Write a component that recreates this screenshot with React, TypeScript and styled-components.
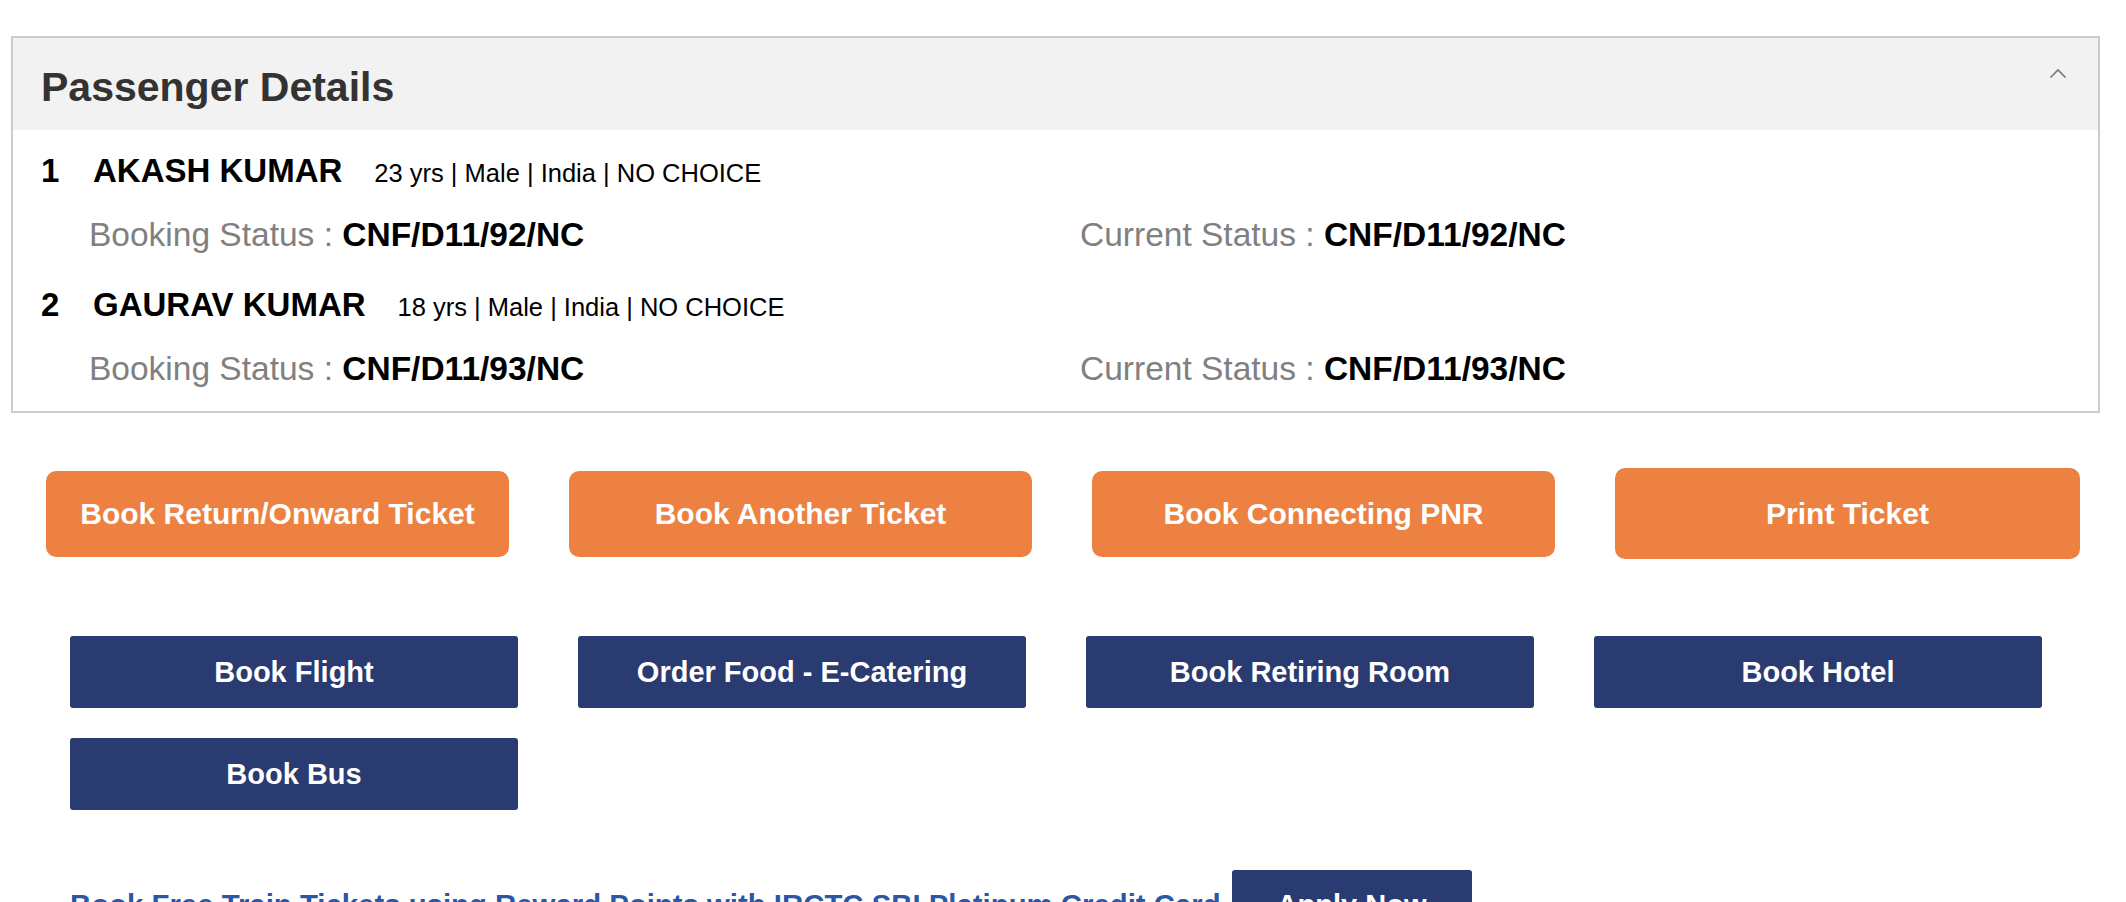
import React from "react";
import styled, { createGlobalStyle } from "styled-components";

const GlobalStyle = createGlobalStyle`
  html, body {
    margin: 0;
    padding: 0;
    overflow: hidden;
    background: #ffffff;
  }
  body {
    font-family: "Liberation Sans", Arial, Helvetica, sans-serif;
    color: #000;
  }
  * { box-sizing: border-box; }
`;

const Page = styled.div`
  padding: 36px 0 0 11px;
  width: 2126px;
`;

const Panel = styled.section`
  width: 2089px;
  border: 2px solid #cccccc;
  background: #ffffff;
`;

const PanelHeader = styled.header`
  display: flex;
  justify-content: space-between;
  align-items: flex-start;
  height: 92px;
  padding: 25px 31px 0 28px;
  background: #f2f2f2;
`;

const Title = styled.h2`
  margin: 0;
  font-size: 41px;
  line-height: 48px;
  font-weight: 700;
  color: #333333;
`;

const Toggle = styled.span`
  display: flex;
  margin-top: 5px;
`;

const PanelBody = styled.div`
  padding: 21px 0 22px 28px;
`;

const Passenger = styled.div`
  & + & {
    margin-top: 30px;
  }
`;

const NameRow = styled.div`
  display: flex;
  align-items: baseline;
  line-height: 40px;
  margin-bottom: 22px;
`;

const Index = styled.span`
  width: 52px;
  font-size: 33px;
  font-weight: 700;
`;

const Name = styled.span`
  font-size: 33px;
  font-weight: 700;
`;

const Meta = styled.span`
  margin-left: 32px;
  font-size: 25.5px;
  color: #000;
`;

const StatusGrid = styled.div`
  display: grid;
  grid-template-columns: 991px 1fr;
  padding-left: 48px;
  line-height: 40px;
  font-size: 33.5px;
`;

const Status = styled.div`
  white-space: nowrap;
`;

const Label = styled.span`
  color: #808080;
`;

const Value = styled.span`
  font-weight: 700;
  color: #000;
`;

const ActionRow = styled.div`
  display: flex;
  align-items: center;
  gap: 60px;
  height: 91px;
  margin: 55px 0 0 35px;
`;

const OrangeButton = styled.button<{ $wide?: boolean }>`
  width: ${(p) => (p.$wide ? "465px" : "463px")};
  height: ${(p) => (p.$wide ? "91px" : "86px")};
  border: none;
  border-radius: 10px;
  background: #ec8142;
  color: #ffffff;
  font-family: "Liberation Sans", Arial, Helvetica, sans-serif;
  font-size: 30px;
  font-weight: 700;
  padding: 0;
  cursor: pointer;
`;

const ServiceGrid = styled.div`
  display: grid;
  grid-template-columns: repeat(4, 448px);
  column-gap: 60px;
  row-gap: 30px;
  margin: 77px 0 0 59px;
`;

const NavyButton = styled.button`
  height: 72px;
  border: none;
  border-radius: 3px;
  background: #2a3b72;
  color: #ffffff;
  font-family: "Liberation Sans", Arial, Helvetica, sans-serif;
  font-size: 29px;
  font-weight: 700;
  padding: 0;
  cursor: pointer;
`;

const Promo = styled.div`
  display: flex;
  align-items: baseline;
  gap: 11px;
  margin: 60px 0 0 59px;
`;

const PromoText = styled.a`
  font-size: 29.35px;
  font-weight: 700;
  line-height: 40px;
  color: #2b57a3;
  text-decoration: none;
  white-space: nowrap;
`;

const ApplyButton = styled.button`
  width: 240px;
  padding: 15px 0;
  border: none;
  border-radius: 3px;
  background: #2a3b72;
  color: #ffffff;
  font-family: "Liberation Sans", Arial, Helvetica, sans-serif;
  font-size: 29px;
  font-weight: 700;
  line-height: 40px;
  cursor: pointer;
`;

const passengers = [
  {
    no: 1,
    name: "AKASH KUMAR",
    meta: "23 yrs | Male | India | NO CHOICE",
    booking: "CNF/D11/92/NC",
    current: "CNF/D11/92/NC",
  },
  {
    no: 2,
    name: "GAURAV KUMAR",
    meta: "18 yrs | Male | India | NO CHOICE",
    booking: "CNF/D11/93/NC",
    current: "CNF/D11/93/NC",
  },
];

const services = [
  "Book Flight",
  "Order Food - E-Catering",
  "Book Retiring Room",
  "Book Hotel",
  "Book Bus",
];

export default function App() {
  return (
    <>
      <GlobalStyle />
      <Page>
        <Panel>
          <PanelHeader>
            <Title>Passenger Details</Title>
            <Toggle>
              <svg width="18" height="11" viewBox="0 0 18 11" aria-hidden="true">
                <polyline
                  points="1.5,9.5 9,2 16.5,9.5"
                  fill="none"
                  stroke="#777777"
                  strokeWidth="1.6"
                />
              </svg>
            </Toggle>
          </PanelHeader>
          <PanelBody>
            {passengers.map((p) => (
              <Passenger key={p.no}>
                <NameRow>
                  <Index>{p.no}</Index>
                  <Name>{p.name}</Name>
                  <Meta>{p.meta}</Meta>
                </NameRow>
                <StatusGrid>
                  <Status>
                    <Label>Booking Status : </Label>
                    <Value>{p.booking}</Value>
                  </Status>
                  <Status>
                    <Label>Current Status : </Label>
                    <Value>{p.current}</Value>
                  </Status>
                </StatusGrid>
              </Passenger>
            ))}
          </PanelBody>
        </Panel>

        <ActionRow>
          <OrangeButton>Book Return/Onward Ticket</OrangeButton>
          <OrangeButton>Book Another Ticket</OrangeButton>
          <OrangeButton>Book Connecting PNR</OrangeButton>
          <OrangeButton $wide>Print Ticket</OrangeButton>
        </ActionRow>

        <ServiceGrid>
          {services.map((s) => (
            <NavyButton key={s}>{s}</NavyButton>
          ))}
        </ServiceGrid>

        <Promo>
          <PromoText href="#">
            Book Free Train Tickets using Reward Points with IRCTC SBI Platinum Credit Card
          </PromoText>
          <ApplyButton>Apply Now</ApplyButton>
        </Promo>
      </Page>
    </>
  );
}
